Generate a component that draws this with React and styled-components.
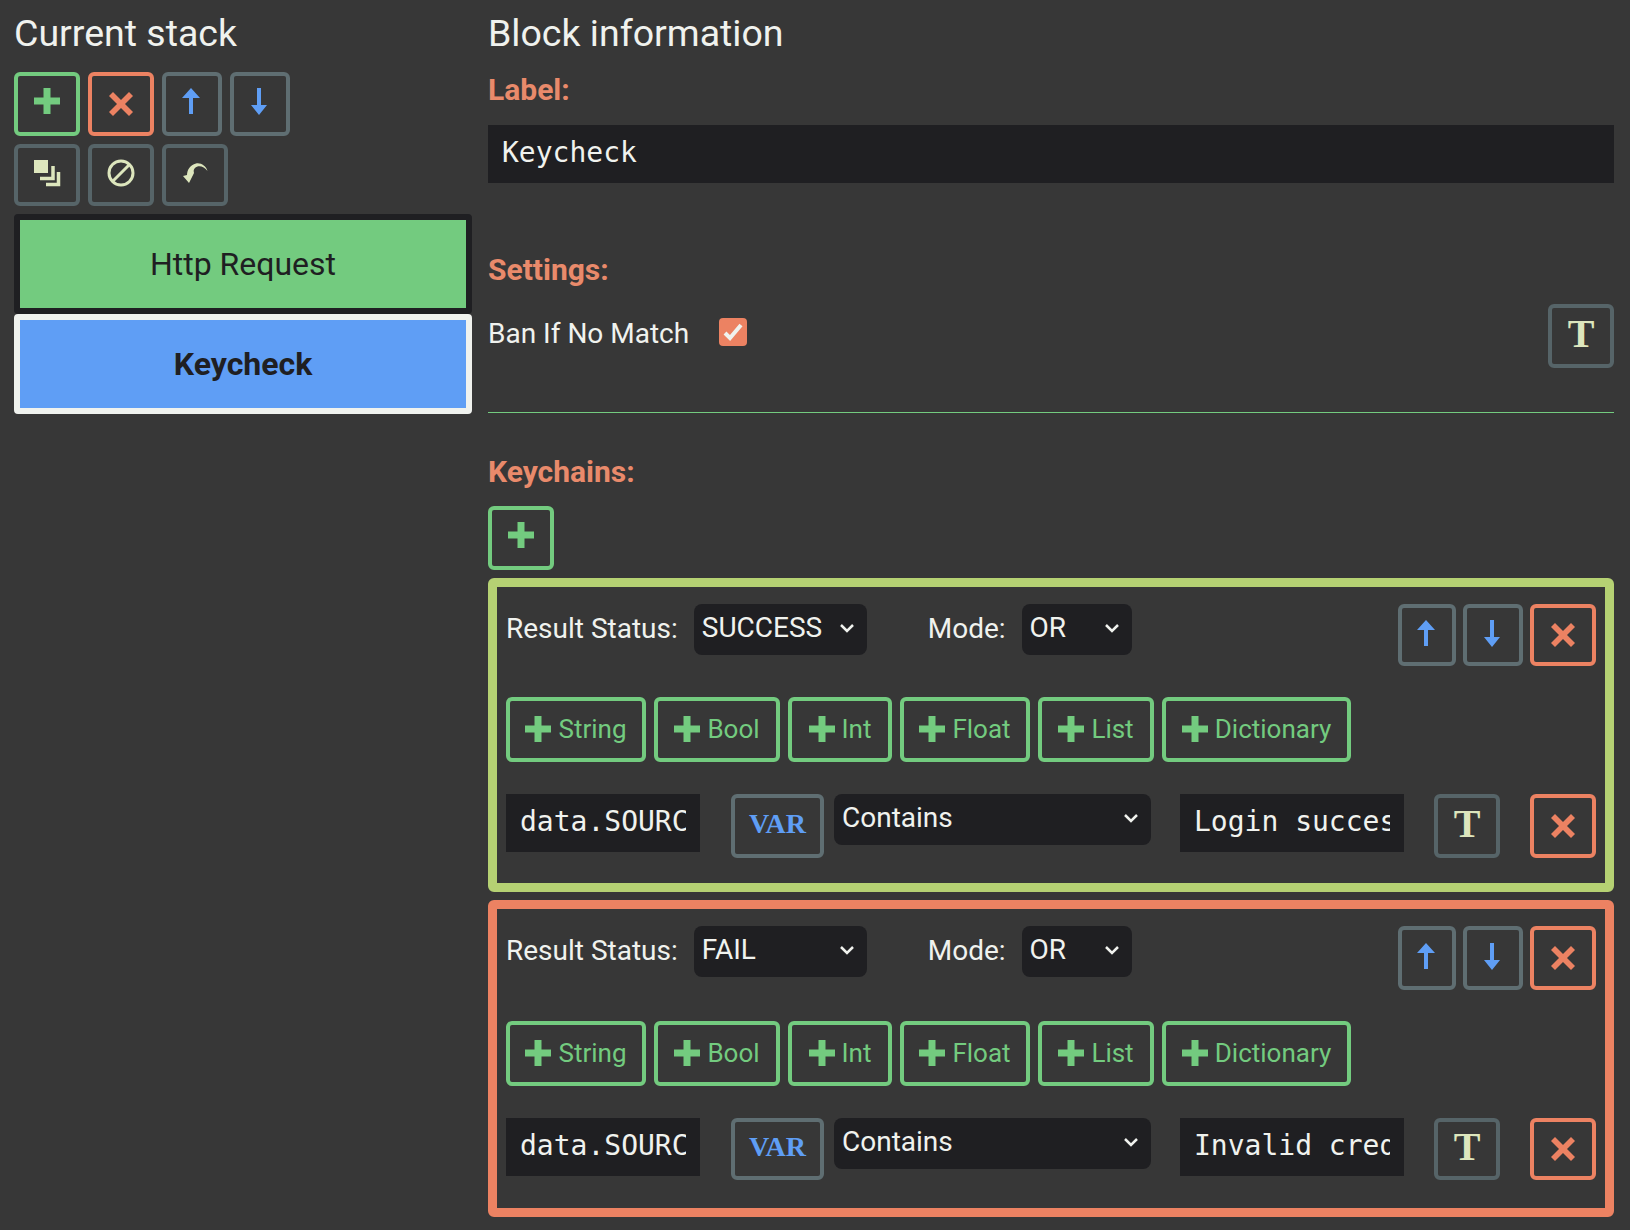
import React from "react";
import styled, { createGlobalStyle } from "styled-components";

const GREEN = "#73cb7f";
const CORAL = "#ec8262";
const BLUE = "#5f9ef5";
const LIME = "#b5d173";
const SLATE = "#5f6e72";
const DIM_SLATE = "#566468";
const DARK = "#1f1f22";
const LIGHT = "#f0f2ee";
const ICON_PALE = "#dde6bd";

const Global = createGlobalStyle`
  html, body {
    margin: 0;
    background: #373737;
  }
  * {
    box-sizing: border-box;
  }
`;

const Page = styled.div`
  width: 1630px;
  height: 1230px;
  padding: 0 16px 0 14px;
  display: flex;
  gap: 16px;
  overflow: hidden;
  background: #373737;
  color: ${LIGHT};
  font-family: Roboto, "Liberation Sans", sans-serif;
`;

const LeftColumn = styled.div`
  width: 458px;
  flex: none;
  display: flex;
  flex-direction: column;
`;

const RightColumn = styled.div`
  flex: 1;
  min-width: 0;
  display: flex;
  flex-direction: column;
`;

const Title = styled.h2`
  margin: 12px 0 18px;
  font-size: 37.5px;
  line-height: 42px;
  font-weight: 400;
`;

const ToolRow = styled.div`
  display: flex;
  gap: 8px;
  margin-bottom: 8px;
`;

const IconButton = styled.button`
  width: ${(p) => p.$w || 66}px;
  height: ${(p) => p.$h || 64}px;
  flex: none;
  padding: 0 ${(p) => p.$nudge || 0}px ${(p) => p.$lift ?? 6}px 0;
  display: flex;
  align-items: center;
  justify-content: center;
  background: transparent;
  border: 4px solid ${(p) => p.$color || SLATE};
  border-radius: 6px;
`;

const StackItem = styled.div`
  height: 100px;
  display: flex;
  align-items: center;
  justify-content: center;
  background: ${(p) => p.$bg};
  border: 6px solid ${(p) => p.$edge};
  border-radius: 4px;
  color: ${DARK};
  font-size: 32px;
  font-weight: ${(p) => (p.$bold ? 700 : 400)};
`;

const SectionLabel = styled.div`
  color: #e98a6b;
  font-size: 30px;
  line-height: 34px;
  font-weight: 700;
  margin: ${(p) => p.$m};
`;

const TextField = styled.input`
  display: block;
  width: ${(p) => (p.$w ? `${p.$w}px` : "100%")};
  height: 58px;
  flex: none;
  padding: 0 14px 3px;
  background: ${DARK};
  border: 0;
  outline: 0;
  color: ${LIGHT};
  font-family: "DejaVu Sans Mono", "Liberation Mono", monospace;
  font-size: 28px;
`;

const SettingRow = styled.div`
  display: flex;
  align-items: flex-start;
  height: 64px;
  margin-top: 17px;
`;

const SettingName = styled.span`
  font-size: 28px;
  line-height: 60px;
`;

const Check = styled.span`
  width: 28px;
  height: 28px;
  margin: 14px 0 0 30px;
  display: flex;
  align-items: center;
  justify-content: center;
  background: ${CORAL};
  border-radius: 4px;
`;

const TypeLetter = styled.span`
  color: ${ICON_PALE};
  font-family: "Liberation Serif", serif;
  font-size: 40px;
  line-height: 1;
  font-weight: 700;
`;

const Divider = styled.hr`
  width: 100%;
  height: 1px;
  margin: 44px 0 0;
  border: 0;
  background: ${GREEN};
`;

const AddSpacer = styled.div`
  height: 8px;
  flex: none;
`;

const KeychainBox = styled.div`
  height: ${(p) => p.$h}px;
  margin-bottom: 8px;
  padding: 17px 9px 0 9px;
  border: 9px solid ${(p) => p.$color};
  border-radius: 6px;
`;

const ChainHeader = styled.div`
  display: flex;
  align-items: flex-start;
  height: ${(p) => p.$h}px;
`;

const FieldLabel = styled.span`
  font-size: 28px;
  line-height: 50px;
  margin-right: ${(p) => p.$mr}px;
`;

const Dropdown = styled.div`
  width: ${(p) => p.$w}px;
  height: 51px;
  flex: none;
  margin-right: ${(p) => p.$mr || 0}px;
  padding: 0 12px 4px 8px;
  display: flex;
  align-items: center;
  justify-content: space-between;
  background: ${DARK};
  border-radius: 8px;
  font-size: 28px;
`;

const MoveGroup = styled.div`
  margin-left: auto;
  display: flex;
  gap: 7px;
`;

const AddRow = styled.div`
  display: flex;
  gap: 8px;
  height: 97px;
`;

const AddButton = styled.button`
  width: ${(p) => p.$w}px;
  height: 65px;
  padding: 0 0 1px;
  display: flex;
  align-items: center;
  justify-content: center;
  gap: 7px;
  background: transparent;
  border: 4px solid ${GREEN};
  border-radius: 6px;
  color: ${GREEN};
  font-family: Roboto, "Liberation Sans", sans-serif;
  font-size: 26px;
`;

const KeyRow = styled.div`
  display: flex;
  align-items: flex-start;
`;

const VarButton = styled.button`
  width: 93px;
  height: ${(p) => p.$h}px;
  flex: none;
  margin: 0 10px 0 31px;
  padding: 0 0 4px;
  background: transparent;
  border: 4px solid ${SLATE};
  border-radius: 6px;
  color: ${BLUE};
  font-family: "Liberation Serif", serif;
  font-size: 28px;
  font-weight: 700;
`;

const KeySpacer = styled.div`
  width: ${(p) => p.$w}px;
  flex: none;
`;

const Svg = styled.svg`
  display: block;
  flex: none;
`;

const PlusIcon = ({ size = 26 }) => (
  <Svg width={size} height={size} viewBox="0 0 26 26">
    <path d="M9.5 0h7v9.5H26v7h-9.5V26h-7v-9.5H0v-7h9.5z" fill={GREEN} />
  </Svg>
);

const CrossIcon = () => (
  <Svg width="26" height="26" viewBox="0 0 26 26">
    <path d="M1 5l4-4 8 8 8-8 4 4-8 8 8 8-4 4-8-8-8 8-4-4 8-8z" fill={CORAL} />
  </Svg>
);

const UpIcon = () => (
  <Svg width="18" height="26" viewBox="0 0 18 26">
    <path d="M9 0l9 10h-7v16H7V10H0z" fill={BLUE} />
  </Svg>
);

const DownIcon = () => (
  <Svg width="16" height="27" viewBox="0 0 16 27">
    <path d="M8 27l8-10h-6V0H6v17H0z" fill={BLUE} />
  </Svg>
);

const MergeIcon = () => (
  <Svg width="27" height="27" viewBox="0 0 27 27">
    <rect x="0" y="0" width="14" height="13" fill={ICON_PALE} />
    <path d="M6 18.500h13V6" fill="none" stroke={ICON_PALE} strokeWidth="3.5" />
    <path d="M12 24.500h12.500V12" fill="none" stroke={ICON_PALE} strokeWidth="3.5" />
  </Svg>
);

const BanIcon = () => (
  <Svg width="28" height="28" viewBox="0 0 28 28">
    <circle cx="14" cy="14" r="12" fill="none" stroke={ICON_PALE} strokeWidth="3" />
    <path d="M6 22L22 6" stroke={ICON_PALE} strokeWidth="3" />
  </Svg>
);

const UndoIcon = () => (
  <Svg width="25" height="20" viewBox="0 0 25 20">
    <path
      d="M24.500 8C21 3 15 2 12 5c-1.500 1.500-1.500 3-1 5L6 20 0 13l4-1C4 7 7 2 13 .5 18-.5 23 3 24.500 8z"
      fill={ICON_PALE}
    />
  </Svg>
);

const CheckMark = () => (
  <Svg width="20" height="18" viewBox="0 0 20 18">
    <path d="M2 10l5 5L18 2" fill="none" stroke={LIGHT} strokeWidth="4" />
  </Svg>
);

const Chevron = () => (
  <Svg width="16" height="10" viewBox="0 0 16 10">
    <path d="M2 2l6 6 6-6" fill="none" stroke={LIGHT} strokeWidth="2.5" />
  </Svg>
);

const ADD_TYPES = [
  ["String", 140],
  ["Bool", 126],
  ["Int", 104],
  ["Float", 130],
  ["List", 116],
  ["Dictionary", 189],
];

function Keychain({ color, status, value, height, headerHeight, moveHeight, keyHeight }) {
  return (
    <KeychainBox $color={color} $h={height}>
      <ChainHeader $h={headerHeight}>
        <FieldLabel $mr={16}>Result Status:</FieldLabel>
        <Dropdown $w={173} $mr={61}>
          {status}
          <Chevron />
        </Dropdown>
        <FieldLabel $mr={16}>Mode:</FieldLabel>
        <Dropdown $w={110}>
          OR
          <Chevron />
        </Dropdown>
        <MoveGroup>
          <IconButton $w={58} $h={moveHeight} $lift={4} $nudge={3}>
            <UpIcon />
          </IconButton>
          <IconButton $w={60} $h={moveHeight} $lift={4} $nudge={3}>
            <DownIcon />
          </IconButton>
          <IconButton $color={CORAL} $h={moveHeight} $lift={0}>
            <CrossIcon />
          </IconButton>
        </MoveGroup>
      </ChainHeader>
      <AddRow>
        {ADD_TYPES.map(([name, width]) => (
          <AddButton key={name} $w={width}>
            <PlusIcon />
            {name}
          </AddButton>
        ))}
      </AddRow>
      <KeyRow>
        <TextField $w={194} readOnly value="data.SOURCE" />
        <VarButton $h={keyHeight}>VAR</VarButton>
        <Dropdown $w={317} $mr={29}>
          Contains
          <Chevron />
        </Dropdown>
        <TextField $w={224} readOnly value={value} />
        <KeySpacer $w={30} />
        <IconButton $color={DIM_SLATE} $h={keyHeight} $lift={4}>
          <TypeLetter>T</TypeLetter>
        </IconButton>
        <KeySpacer $w={30} />
        <IconButton $color={CORAL} $h={keyHeight} $lift={0}>
          <CrossIcon />
        </IconButton>
      </KeyRow>
    </KeychainBox>
  );
}

export default function App() {
  return (
    <Page>
      <Global />
      <LeftColumn>
        <Title>Current stack</Title>
        <ToolRow>
          <IconButton $color={GREEN}>
            <PlusIcon />
          </IconButton>
          <IconButton $color={CORAL} $lift={0}>
            <CrossIcon />
          </IconButton>
          <IconButton $w={60} $nudge={3}>
            <UpIcon />
          </IconButton>
          <IconButton $w={60} $nudge={3}>
            <DownIcon />
          </IconButton>
        </ToolRow>
        <ToolRow>
          <IconButton $h={62} $lift={4} $color={DIM_SLATE}>
            <MergeIcon />
          </IconButton>
          <IconButton $h={62} $lift={4} $color={DIM_SLATE}>
            <BanIcon />
          </IconButton>
          <IconButton $h={62} $lift={4} $color={DIM_SLATE}>
            <UndoIcon />
          </IconButton>
        </ToolRow>
        <StackItem $bg={GREEN} $edge={DARK}>
          Http Request
        </StackItem>
        <StackItem $bg={BLUE} $edge={LIGHT} $bold>
          Keycheck
        </StackItem>
      </LeftColumn>
      <RightColumn>
        <Title>Block information</Title>
        <SectionLabel $m="1px 0 18px">Label:</SectionLabel>
        <TextField readOnly value="Keycheck" />
        <SectionLabel $m="70px 0 0">Settings:</SectionLabel>
        <SettingRow>
          <SettingName>Ban If No Match</SettingName>
          <Check>
            <CheckMark />
          </Check>
          <MoveGroup>
            <IconButton $color={DIM_SLATE} $lift={4}>
              <TypeLetter>T</TypeLetter>
            </IconButton>
          </MoveGroup>
        </SettingRow>
        <Divider />
        <SectionLabel $m="42px 0 17px">Keychains:</SectionLabel>
        <IconButton $color={GREEN}>
          <PlusIcon />
        </IconButton>
        <AddSpacer />
        <Keychain
          color={LIME}
          status="SUCCESS"
          value="Login success"
          height={314}
          headerHeight={93}
          moveHeight={62}
          keyHeight={64}
        />
        <Keychain
          color={CORAL}
          status="FAIL"
          value="Invalid credentials"
          height={317}
          headerHeight={95}
          moveHeight={64}
          keyHeight={62}
        />
      </RightColumn>
    </Page>
  );
}
